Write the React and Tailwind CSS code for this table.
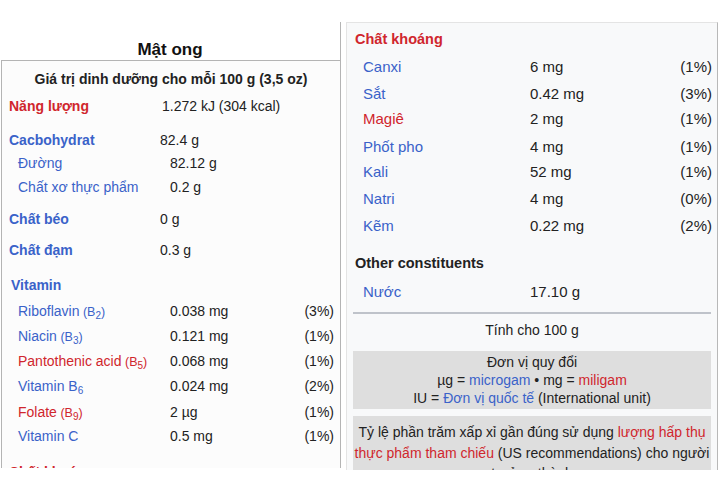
import React from 'react';

const BLUE = 'text-[#3a62c9]';
const RED = 'text-[#d0262d]';

const leftRows = [
  { mt: 'mt-[7px]', label: 'Năng lượng', color: RED, bold: true, value: '1.272 kJ (304 kcal)', w: 'w-[160px]' },
  { mt: 'mt-[14px]', label: 'Cacbohydrat', color: BLUE, bold: true, value: '82.4 g' },
  { mt: 'mt-[3px]', label: 'Đường', color: BLUE, sub: true, value: '82.12 g' },
  { mt: 'mt-[4px]', label: 'Chất xơ thực phẩm', color: BLUE, sub: true, value: '0.2 g' },
  { mt: 'mt-[12px]', label: 'Chất béo', color: BLUE, bold: true, value: '0 g' },
  { mt: 'mt-[11px]', label: 'Chất đạm', color: BLUE, bold: true, value: '0.3 g' },
];

const vitamins = [
  { mt: 'mt-[6px]', name: 'Riboflavin', b: '2', color: BLUE, value: '0.038 mg', pct: '(3%)' },
  { mt: 'mt-[5px]', name: 'Niacin', b: '3', color: BLUE, value: '0.121 mg', pct: '(1%)' },
  { mt: 'mt-[5px]', name: 'Pantothenic acid', b: '5', color: RED, value: '0.068 mg', pct: '(1%)' },
  { mt: 'mt-[5px]', name: 'Vitamin B', b6: true, color: BLUE, value: '0.024 mg', pct: '(2%)' },
  { mt: 'mt-[6px]', name: 'Folate', b: '9', color: RED, value: '2 µg', pct: '(1%)' },
  { mt: 'mt-[4px]', name: 'Vitamin C', color: BLUE, value: '0.5 mg', pct: '(1%)' },
];

const minerals = [
  { mt: 'mt-[8px]', name: 'Canxi', color: BLUE, value: '6 mg', pct: '(1%)' },
  { mt: 'mt-[7px]', name: 'Sắt', color: BLUE, value: '0.42 mg', pct: '(3%)' },
  { mt: 'mt-[5px]', name: 'Magiê', color: RED, value: '2 mg', pct: '(1%)' },
  { mt: 'mt-[8px]', name: 'Phốt pho', color: BLUE, value: '4 mg', pct: '(1%)' },
  { mt: 'mt-[5px]', name: 'Kali', color: BLUE, value: '52 mg', pct: '(1%)' },
  { mt: 'mt-[7px]', name: 'Natri', color: BLUE, value: '4 mg', pct: '(0%)' },
  { mt: 'mt-[7px]', name: 'Kẽm', color: BLUE, value: '0.22 mg', pct: '(2%)' },
];

function LeftPanel() {
  return (
    <div className="w-[341px] shrink-0 h-[468px] pt-[22px] overflow-hidden">
      <div className="h-full border-r border-[#b4b4b4] flex flex-col">
        <div className="h-[40px] pt-[18px] text-center text-[17px] leading-[20px] font-bold text-[#111]">Mật ong</div>
        <div className="ml-[1px] flex-1 border-l border-t border-[#b4b4b4] bg-[#fcfcfc] text-[14px] leading-[20px] text-[#222]">
          <div className="mt-[8px] h-[20px] text-center font-bold">Giá trị dinh dưỡng cho mỗi 100 g (3,5 oz)</div>
          {leftRows.map((r) => (
            <div key={r.label} className={`${r.mt} h-[20px] flex`}>
              <div className={`${r.w || (r.sub ? 'w-[168px]' : 'w-[158px]')} ${r.sub ? 'pl-[16px]' : 'pl-[7px]'} ${r.color} ${r.bold ? 'font-bold' : ''}`}>{r.label}</div>
              <div>{r.value}</div>
            </div>
          ))}
          <div className={`mt-[15px] h-[20px] pl-[9px] font-bold ${BLUE}`}>Vitamin</div>
          {vitamins.map((v) => (
            <div key={v.name} className={`${v.mt} h-[20px] flex`}>
              <div className={`w-[168px] pl-[16px] ${v.color}`}>
                {v.name}
                {v.b && (
                  <span className="text-[12.5px]"> (B<sub className="text-[10px]">{v.b}</sub>)</span>
                )}
                {v.b6 && <sub className="text-[10px]">6</sub>}
              </div>
              <div>{v.value}</div>
              <div className="ml-auto pr-[6px]">{v.pct}</div>
            </div>
          ))}
          <div className={`mt-[16px] h-[20px] pl-[7px] font-bold ${RED}`}>Chất khoáng</div>
        </div>
      </div>
    </div>
  );
}

function RightPanel() {
  return (
    <div className="ml-[5px] mt-[22px] w-[372px] h-[448px] overflow-hidden border-t border-l border-r border-t-[#e4e4e4] border-l-[#e4e4e4] border-r-[#b8b8b8] bg-[#f8f9fa] text-[#222] leading-[20px]">
      <div className={`mt-[6px] h-[20px] pl-[8px] text-[14.5px] font-bold ${RED}`}>Chất khoáng</div>
      {minerals.map((m) => (
        <div key={m.name} className={`${m.mt} h-[20px] flex text-[15px]`}>
          <div className={`w-[183px] pl-[16px] ${m.color}`}>{m.name}</div>
          <div>{m.value}</div>
          <div className="ml-auto pr-[5px]">{m.pct}</div>
        </div>
      ))}
      <div className="mt-[17px] h-[20px] pl-[8px] text-[14.5px] font-bold">Other constituents</div>
      <div className="mt-[9px] h-[20px] flex text-[15px]">
        <div className={`w-[183px] pl-[16px] ${BLUE}`}>Nước</div>
        <div>17.10 g</div>
      </div>
      <div className="mt-[10px] mx-[6px] h-[2px] bg-[#bfc3ca]" />
      <div className="mt-[6px] h-[20px] text-center text-[14px]">Tính cho 100 g</div>
      <div className="mt-[11px] mx-[6px] h-[58px] pt-[2px] bg-[#dedede] text-center text-[14px] leading-[18px]">
        <div>Đơn vị quy đổi</div>
        <div>
          µg = <span className={BLUE}>microgam</span> • mg = <span className={RED}>miligam</span>
        </div>
        <div>
          IU = <span className={BLUE}>Đơn vị quốc tế</span> (International unit)
        </div>
      </div>
      <div className="mt-[7px] mx-[6px] h-[80px] pt-[6px] bg-[#dedede] text-center text-[14px] leading-[20.5px] whitespace-nowrap">
        <div>
          Tỷ lệ phần trăm xấp xỉ gần đúng sử dụng <span className={RED}>lượng hấp thụ</span>
        </div>
        <div>
          <span className={RED}>thực phẩm tham chiếu</span> (US recommendations) cho người
        </div>
        <div>trưởng thành</div>
      </div>
    </div>
  );
}

export default function App() {
  return (
    <div className="w-[720px] h-[480px] bg-white flex items-start overflow-hidden" style={{ fontFamily: '"Liberation Sans", Arial, sans-serif' }}>
      <LeftPanel />
      <RightPanel />
    </div>
  );
}
